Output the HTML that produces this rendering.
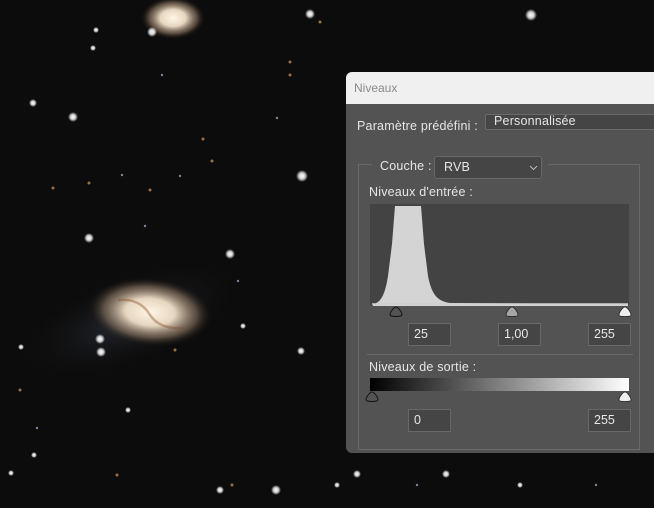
<!DOCTYPE html>
<html><head><meta charset="utf-8"><style>
*{margin:0;padding:0;box-sizing:border-box}
body{width:654px;height:508px;overflow:hidden;background:#0b0a0b;position:relative;font-family:"Liberation Sans",Tahoma,sans-serif}
.bg{position:absolute;left:0;top:0}
.dlg{position:absolute;left:346px;top:72px;width:320px;height:381px;background:#535353;border-radius:6px 0 0 6px;overflow:hidden}
.tb{height:32px;background:#f0f0f0;color:#8a8a8a;font-size:12px;padding:9px 0 0 8px}
.t{position:absolute;color:#e6e6e6;font-size:12.5px;white-space:nowrap;letter-spacing:0.2px}
.in{position:absolute;background:#454545;border:1px solid #686868;color:#e8e8e8;font-size:12.5px;padding:3px 0 0 5px;height:23px;width:43px}
</style></head><body>
<svg class="bg" width="654" height="508" viewBox="0 0 654 508">
<defs>
<radialGradient id="g1" cx="0.5" cy="0.5" r="0.5"><stop offset="0" stop-color="#fff6e6"/><stop offset="0.4" stop-color="#e6d6c0"/><stop offset="0.75" stop-color="#8a7460" stop-opacity="0.6"/><stop offset="1" stop-color="#201810" stop-opacity="0"/></radialGradient>
<radialGradient id="g2" cx="0.5" cy="0.5" r="0.5"><stop offset="0" stop-color="#3a4656" stop-opacity="0.55"/><stop offset="1" stop-color="#101418" stop-opacity="0"/></radialGradient>
<radialGradient id="s" cx="0.5" cy="0.5" r="0.5"><stop offset="0" stop-color="#fff"/><stop offset="0.5" stop-color="#fff" stop-opacity="0.8"/><stop offset="1" stop-color="#fff" stop-opacity="0"/></radialGradient>
</defs>
<rect width="654" height="508" fill="#0d0c0c"/>
<ellipse cx="130" cy="320" rx="115" ry="45" fill="url(#g2)" transform="rotate(-20 130 320)"/>
<ellipse cx="150" cy="312" rx="62" ry="34" fill="url(#g1)" transform="rotate(5 150 312)"/>
<path d="M118 300 Q140 298 150 315 Q160 330 185 328" stroke="#8a4a20" stroke-width="2.5" fill="none" opacity="0.4"/>
<ellipse cx="173" cy="18" rx="32" ry="21" fill="url(#g1)"/>
<g fill="url(#s)">
<circle cx="152" cy="32" r="5"/><circle cx="310" cy="14" r="5"/><circle cx="531" cy="15" r="6"/>
<circle cx="302" cy="176" r="6"/><circle cx="73" cy="117" r="5"/><circle cx="33" cy="103" r="4"/>
<circle cx="89" cy="238" r="5"/><circle cx="230" cy="254" r="5"/><circle cx="100" cy="339" r="5"/>
<circle cx="101" cy="352" r="5"/><circle cx="21" cy="347" r="3"/><circle cx="301" cy="351" r="4"/>
<circle cx="276" cy="490" r="5"/><circle cx="220" cy="490" r="4"/><circle cx="357" cy="474" r="4"/>
<circle cx="446" cy="474" r="4"/><circle cx="96" cy="30" r="3"/><circle cx="520" cy="485" r="3"/>
<circle cx="128" cy="410" r="3"/><circle cx="34" cy="455" r="3"/><circle cx="11" cy="473" r="3"/>
<circle cx="337" cy="485" r="3"/><circle cx="243" cy="326" r="3"/><circle cx="93" cy="48" r="3"/>
</g>
<g fill="#c08a50" opacity="0.8">
<circle cx="203" cy="139" r="1.5"/><circle cx="290" cy="62" r="1.5"/><circle cx="212" cy="161" r="1.5"/><circle cx="150" cy="190" r="1.5"/><circle cx="53" cy="188" r="1.5"/><circle cx="89" cy="183" r="1.5"/><circle cx="117" cy="475" r="1.5"/><circle cx="232" cy="485" r="1.5"/><circle cx="320" cy="22" r="1.5"/><circle cx="175" cy="350" r="1.5"/><circle cx="290" cy="75" r="1.5"/><circle cx="20" cy="390" r="1.5"/>
</g>
<g fill="#aab8d0" opacity="0.7">
<circle cx="162" cy="75" r="1.2"/><circle cx="122" cy="175" r="1.2"/><circle cx="180" cy="176" r="1.2"/><circle cx="277" cy="118" r="1.2"/><circle cx="37" cy="428" r="1.2"/><circle cx="417" cy="485" r="1.2"/><circle cx="596" cy="485" r="1.2"/><circle cx="238" cy="281" r="1.2"/><circle cx="145" cy="226" r="1.2"/>
</g>
</svg>
<div class="dlg">
<div class="tb">Niveaux</div>
<div class="t" style="left:11px;top:47px">Paramètre prédéfini :</div>
<div style="position:absolute;left:139px;top:42px;width:200px;height:16px;background:#454545;border:1px solid #6a6a6a;border-radius:2px"></div>
<div class="t" style="left:148px;top:42px">Personnalisée</div>
<div style="position:absolute;left:12px;top:92px;width:282px;height:286px;border:1px solid #6a6a6a"></div>
<div style="position:absolute;left:26px;top:84px;width:176px;height:16px;background:#535353"></div>
<div class="t" style="left:34px;top:87px">Couche :</div>
<div style="position:absolute;left:88px;top:84px;width:108px;height:23px;background:#454545;border:1px solid #686868;border-radius:3px"></div>
<div class="t" style="left:98px;top:88px">RVB</div>
<svg style="position:absolute;left:183px;top:93px" width="9" height="6"><path d="M1 1 L4.5 4.5 L8 1" stroke="#bbb" fill="none"/></svg>
<div class="t" style="left:23px;top:113px">Niveaux d'entrée :</div>
<div style="position:absolute;left:24px;top:132px;width:259px;height:101px;background:#434343"></div>
<svg style="position:absolute;left:24px;top:132px" width="259" height="102">
<path d="M3 100 C10 99 15 92 18 72 L22 40 L25 2 L51 2 L54 40 L58 72 C62 92 68 97 80 99 L258 100 L258 102 L3 102 Z" fill="#d4d4d4"/>
<line x1="2" y1="100" x2="258" y2="100" stroke="#cfcfcf" stroke-width="1.5"/>
</svg>
<svg style="position:absolute;left:0;top:233px" width="320" height="16">
<path d="M50 2 C52 2 56 7 56 10 C56 12 44 12 44 10 C44 7 48 2 50 2Z" fill="none" stroke="#111" stroke-width="1"/>
<path d="M166 2 C168 2 172 7 172 10 C172 12 160 12 160 10 C160 7 164 2 166 2Z" fill="#a6a6a6" stroke="#222" stroke-width="0.8"/>
<path d="M279 2 C281 2 285 7 285 10 C285 12 273 12 273 10 C273 7 277 2 279 2Z" fill="#eeeeee" stroke="#222" stroke-width="0.8"/>
</svg>
<div class="in" style="left:62px;top:251px">25</div>
<div class="in" style="left:152px;top:251px">1,00</div>
<div class="in" style="left:242px;top:251px">255</div>
<div style="position:absolute;left:21px;top:282px;width:266px;height:1px;background:#6a6a6a"></div>
<div class="t" style="left:23px;top:288px">Niveaux de sortie :</div>
<div style="position:absolute;left:24px;top:306px;width:259px;height:13px;background:linear-gradient(to right,#000,#fff)"></div>
<svg style="position:absolute;left:0;top:319px" width="320" height="16">
<path d="M26 1 C28 1 32 6 32 9 C32 11 20 11 20 9 C20 6 24 1 26 1Z" fill="none" stroke="#111" stroke-width="1"/>
<path d="M279 1 C281 1 285 6 285 9 C285 11 273 11 273 9 C273 6 277 1 279 1Z" fill="#eeeeee" stroke="#222" stroke-width="0.8"/>
</svg>
<div class="in" style="left:62px;top:337px">0</div>
<div class="in" style="left:242px;top:337px">255</div>
</div>
</body></html>
